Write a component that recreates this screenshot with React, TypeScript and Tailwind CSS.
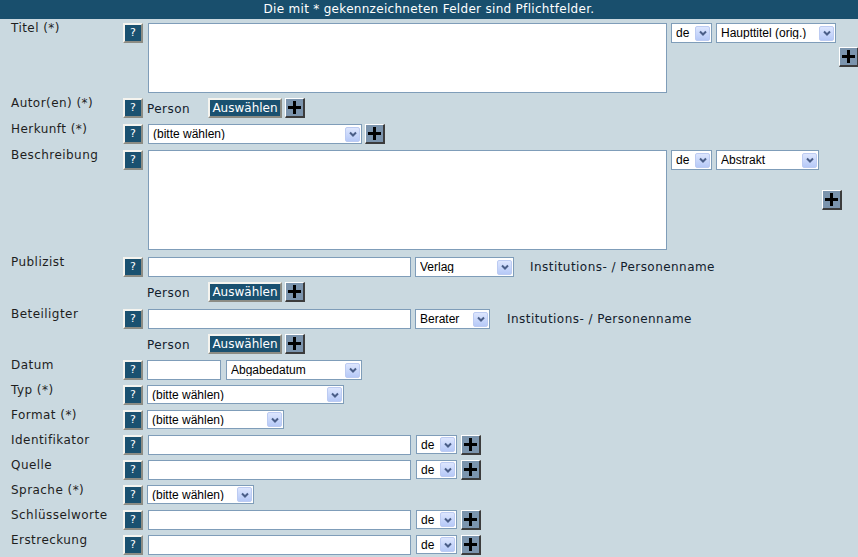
import React from "react";

const Chevron = () => (
  <svg width="8" height="6" viewBox="0 0 8 6">
    <path d="M1 1.5 L4 4.5 L7 1.5" fill="none" stroke="#4a5e88" strokeWidth="2" />
  </svg>
);

function Select({ w, text, h = "h-[20px]" }: { w: string; text: string; h?: string }) {
  return (
    <div
      className={`${w} ${h} flex shrink-0 items-center border border-[#7f9db9] bg-white pl-[4px] pr-[1px] font-['Liberation_Sans',sans-serif] text-[12px] tracking-normal text-black`}
    >
      <span className="flex-1 truncate leading-none">{text}</span>
      <span className="flex h-[15px] w-[15px] items-center justify-center rounded-[2px] border border-[#bccbf2] bg-gradient-to-b from-[#dde6fe] to-[#b6c9f7]">
        <Chevron />
      </span>
    </div>
  );
}

const Help = () => (
  <div className="flex h-[20px] w-[20px] shrink-0 items-center justify-center border-2 border-t-[#f5f4ef] border-l-[#f5f4ef] border-r-[#8c8c84] border-b-[#8c8c84] bg-[#1a5170] text-[11px] leading-[16px] tracking-normal text-white">
    ?
  </div>
);

const Plus = ({ cls = "" }: { cls?: string }) => (
  <div
    className={`flex h-[20px] w-[20px] shrink-0 items-center justify-center border-t border-l border-r-2 border-b-2 border-t-white border-l-white border-r-[#3c3c3c] border-b-[#3c3c3c] bg-[#7b94ad] ${cls}`}
  >
    <svg width="13" height="13" viewBox="0 0 13 13">
      <rect x="5" y="0" width="3" height="13" fill="#000" />
      <rect x="0" y="5" width="13" height="3" fill="#000" />
    </svg>
  </div>
);

const Choose = () => (
  <div className="flex h-[20px] w-[74px] shrink-0 items-center justify-center border-2 border-t-[#f5f4ef] border-l-[#f5f4ef] border-r-[#8c8c84] border-b-[#8c8c84] bg-[#1a5170] text-[12px] leading-[16px] tracking-normal text-white">
    Auswählen
  </div>
);

const Label = ({ children }: { children?: React.ReactNode }) => (
  <div className="-mt-[2px] w-[123px] shrink-0 pl-[11px] leading-[15px] text-[#1e1e1e]">{children}</div>
);

const Input = ({ w }: { w: string }) => (
  <div className={`${w} h-[20px] shrink-0 border border-[#7f9db9] bg-white`} />
);

const PersonPick = () => (
  <div className="ml-[4px] flex items-start">
    <span className="w-[61px] shrink-0 leading-[22px] text-[#12202c]">Person</span>
    <Choose />
    <Plus cls="ml-[3px]" />
  </div>
);

export default function App() {
  return (
    <div className="min-h-screen w-full bg-[#cad9e0] font-['DejaVu_Sans',sans-serif] text-[12px] tracking-[0.45px]">
      <div className="h-[19px] bg-[#194f6d] text-center text-[12px] leading-[19px] tracking-[0.3px] text-white">
        Die mit * gekennzeichneten Felder sind Pflichtfelder.
      </div>
      <div className="mt-[4px] flex flex-col">
        {/* Titel */}
        <div className="flex h-[75px] items-start">
          <Label>Titel (*)</Label>
          <Help />
          <div className="ml-[5px] flex items-start">
            <div className="h-[70px] w-[519px] shrink-0 border border-[#7f9db9] bg-white" />
            <div className="ml-[4px] flex gap-[4px]">
              <Select w="w-[41px]" text="de" />
              <Select w="w-[120px]" text="Haupttitel (orig.)" />
            </div>
            <Plus cls="ml-[3px] self-center -mt-[2px]" />
          </div>
        </div>
        {/* Autor */}
        <div className="flex h-[26px] items-start">
          <Label>Autor(en) (*)</Label>
          <Help />
          <PersonPick />
        </div>
        {/* Herkunft */}
        <div className="flex h-[26px] items-start">
          <Label>Herkunft (*)</Label>
          <Help />
          <div className="ml-[5px] flex items-start gap-[3px]">
            <Select w="w-[214px]" text="(bitte wählen)" />
            <Plus />
          </div>
        </div>
        {/* Beschreibung */}
        <div className="flex h-[107px] items-start">
          <Label>Beschreibung</Label>
          <Help />
          <div className="ml-[5px] flex items-start">
            <div className="h-[100px] w-[519px] shrink-0 border border-[#7f9db9] bg-white" />
            <div className="ml-[4px] flex gap-[4px]">
              <Select w="w-[41px]" text="de" />
              <Select w="w-[103px]" text="Abstrakt" />
            </div>
            <Plus cls="ml-[3px] self-center" />
          </div>
        </div>
        {/* Publizist */}
        <div className="flex h-[25px] items-start">
          <Label>Publizist</Label>
          <Help />
          <div className="ml-[5px] flex items-start">
            <Input w="w-[263px]" />
            <div className="ml-[4px]">
              <Select w="w-[99px]" text="Verlag" />
            </div>
            <span className="ml-[16px] leading-[20px] text-[#12202c]">Institutions- / Personenname</span>
          </div>
        </div>
        <div className="flex h-[27px] items-start">
          <Label />
          <div className="w-[20px] shrink-0" />
          <PersonPick />
        </div>
        {/* Beteiligter */}
        <div className="flex h-[25px] items-start">
          <Label>Beteiligter</Label>
          <Help />
          <div className="ml-[5px] flex items-start">
            <Input w="w-[263px]" />
            <div className="ml-[4px]">
              <Select w="w-[75px]" text="Berater" />
            </div>
            <span className="ml-[17px] leading-[20px] text-[#12202c]">Institutions- / Personenname</span>
          </div>
        </div>
        <div className="flex h-[26px] items-start">
          <Label />
          <div className="w-[20px] shrink-0" />
          <PersonPick />
        </div>
        {/* Datum */}
        <div className="flex h-[25px] items-start">
          <Label>Datum</Label>
          <Help />
          <div className="ml-[4px] flex items-start gap-[5px]">
            <Input w="w-[74px]" />
            <Select w="w-[136px]" text="Abgabedatum" />
          </div>
        </div>
        {/* Typ */}
        <div className="flex h-[25px] items-start">
          <Label>Typ (*)</Label>
          <Help />
          <div className="ml-[4px]">
            <Select w="w-[197px]" h="h-[19px]" text="(bitte wählen)" />
          </div>
        </div>
        {/* Format */}
        <div className="flex h-[25px] items-start">
          <Label>Format (*)</Label>
          <Help />
          <div className="ml-[4px]">
            <Select w="w-[137px]" h="h-[19px]" text="(bitte wählen)" />
          </div>
        </div>
        {["Identifikator", "Quelle"].map((l) => (
          <div key={l} className="flex h-[25px] items-start">
            <Label>{l}</Label>
            <Help />
            <div className="ml-[5px] flex items-start">
              <Input w="w-[263px]" />
              <div className="ml-[5px]">
                <Select w="w-[41px]" h="h-[19px]" text="de" />
              </div>
              <Plus cls="ml-[4px]" />
            </div>
          </div>
        ))}
        {/* Sprache */}
        <div className="flex h-[25px] items-start">
          <Label>Sprache (*)</Label>
          <Help />
          <div className="ml-[4px]">
            <Select w="w-[107px]" h="h-[19px]" text="(bitte wählen)" />
          </div>
        </div>
        {["Schlüsselworte", "Erstreckung"].map((l) => (
          <div key={l} className="flex h-[25px] items-start">
            <Label>{l}</Label>
            <Help />
            <div className="ml-[5px] flex items-start">
              <Input w="w-[263px]" />
              <div className="ml-[5px]">
                <Select w="w-[41px]" h="h-[19px]" text="de" />
              </div>
              <Plus cls="ml-[4px]" />
            </div>
          </div>
        ))}
      </div>
    </div>
  );
}
